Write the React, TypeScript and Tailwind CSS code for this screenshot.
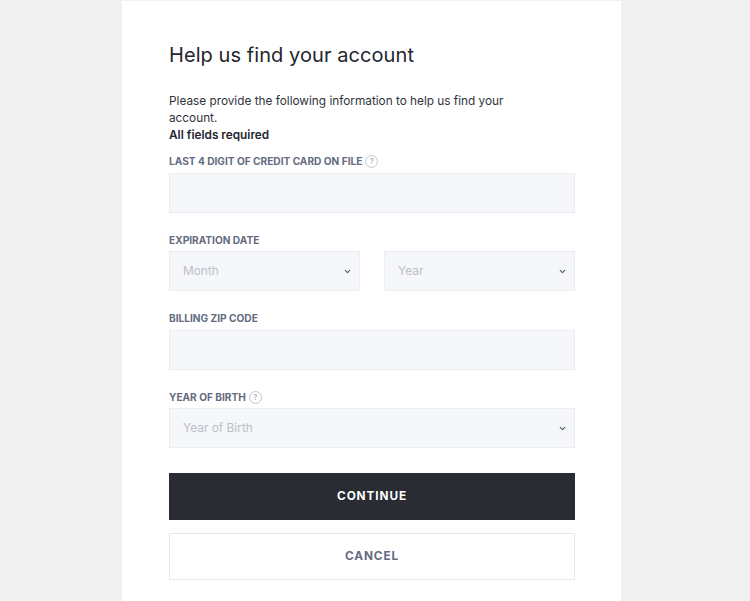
import { ChevronDown } from "lucide-react"

function Help() {
  return (
    <span className="flex h-[13px] w-[13px] items-center justify-center rounded-full border border-[#c4c7ce] text-[8px] font-normal text-[#9a9eab]">
      ?
    </span>
  )
}

function Label({ text, help }: { text: string; help?: boolean }) {
  return (
    <div className="flex h-[14px] items-center gap-[3px] text-[10.15px] font-bold leading-[14px] text-[#646b80]">
      <span>{text}</span>
      {help && <Help />}
    </div>
  )
}

function TextField() {
  return <input className="mt-[5px] block h-[40px] w-full border border-[#ecedf0] bg-[#f6f7fa]" />
}

function SelectField({ placeholder, className }: { placeholder: string; className?: string }) {
  return (
    <div className={`flex h-[40px] items-center justify-between border border-[#ecedf0] bg-[#f6f7fa] pl-[13px] pr-[7px] text-[11.9px] text-[#bcbfc8] ${className ?? ""}`}>
      <span>{placeholder}</span>
      <ChevronDown className="h-[9px] w-[9px] text-[#555b6b]" strokeWidth={3} />
    </div>
  )
}

export default function App() {
  return (
    <div className="flex h-[601px] justify-center overflow-hidden bg-[#f1f1f1] font-['Inter',sans-serif]">
      <div className="ml-[-7px] mt-[1px] w-[499px] bg-white pl-[47px] pr-[46px] pt-[41px]">
        <h1 className="text-[20px] font-normal leading-[26px] tracking-[0.07px] text-[#23262e]">Help us find your account</h1>

        <p className="mt-[25px] max-w-[340px] text-[11.8px] leading-[17px] text-[#30333b]">
          Please provide the following information to help us find your account.
        </p>
        <p className="text-[11.8px] font-semibold leading-[17px] text-[#23262e]">All fields required</p>

        <div className="mt-[10px]">
          <Label text="LAST 4 DIGIT OF CREDIT CARD ON FILE" help />
          <TextField />
        </div>

        <div className="mt-[20px]">
          <Label text="EXPIRATION DATE" />
          <div className="mt-[4px] flex gap-[24px]">
            <SelectField placeholder="Month" className="w-[191px]" />
            <SelectField placeholder="Year" className="w-[191px]" />
          </div>
        </div>

        <div className="mt-[20px]">
          <Label text="BILLING ZIP CODE" />
          <TextField />
        </div>

        <div className="mt-[20px]">
          <Label text="YEAR OF BIRTH" help />
          <SelectField placeholder="Year of Birth" className="mt-[4px]" />
        </div>

        <button className="mt-[25px] flex h-[47px] w-full items-center justify-center bg-[#2a2c33] text-[11.8px] font-bold tracking-[0.9px] text-white">
          CONTINUE
        </button>
        <button className="mt-[13px] flex h-[47px] w-full items-center justify-center border border-[#e6e7eb] bg-white text-[11.8px] font-bold tracking-[0.9px] text-[#646b80]">
          CANCEL
        </button>
      </div>
    </div>
  )
}
